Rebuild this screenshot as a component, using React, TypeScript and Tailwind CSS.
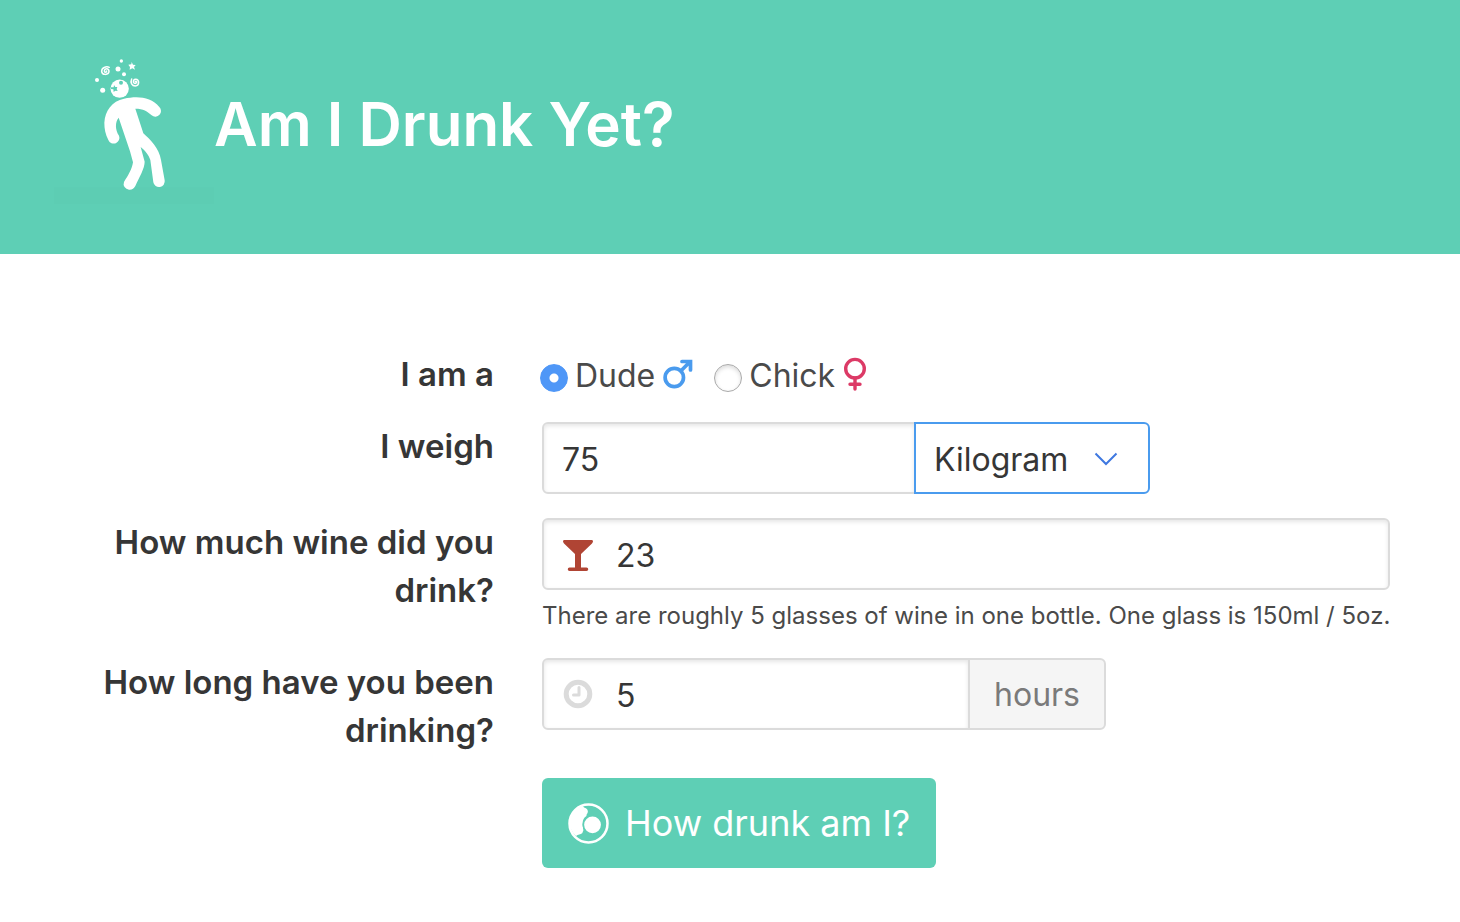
import { useState, type ReactNode } from "react";

function StaggeringFigure() {
  return (
    <svg viewBox="12 0 480 465" className="h-[155px] w-40 shrink-0" aria-hidden="true">
      <rect x="12" y="412" width="480" height="50" fill="#5dcdb3" />
      <path
        d="M175 270C166 252 163 237 163 218C165 182 186 153 222 146C262 137 303 140 328 171A17 17 0 0 1 305 196C292 184 280 176 256 176L280 250C300 268 328 295 333 330L344 391A17 17 0 0 1 310 397L301 330C297 315 283 300 272 291L284 335C284 355 268 382 256 408Q250 420 237 419A17 17 0 0 1 222 396C235 375 246 358 249 337L240 304L206 203C195 215 195 240 207 257A17 17 0 0 1 175 270Z"
        fill="#fff"
      />
      <circle cx="209" cy="116" r="27.500" fill="#fff" />
      <g fill="#5ecfb5">
        <circle cx="213" cy="98" r="6" />
        <path d="M192 105l4 6 6 0-2 6 3 6-7-1-5 4-1-8-7-1 0-5 8 0z" />
      </g>
      <g fill="#fff">
        <circle cx="214" cy="33" r="5" />
        <circle cx="204" cy="57" r="7.500" />
        <circle cx="222" cy="73" r="6" />
        <circle cx="141" cy="90" r="6" />
        <circle cx="158" cy="121" r="7.500" />
        <path d="M245 36l4 8 8 1-5 6 3 8-8-4-8 4 1-8-5-7 9-1z" />
      </g>
      <g fill="none" stroke="#fff" strokeWidth="4.500" strokeLinecap="round">
        <path d="M178 52C168 48 155 53 155 64C156 76 175 76 177 65C177 54 163 54 163 63C163 68 169 68 170 63" />
        <path d="M245 87C240 98 246 108 256 108C269 107 269 88 257 88C247 89 249 102 257 100C262 98 260 93 256 95" />
      </g>
    </svg>
  );
}

function MarsIcon() {
  return (
    <svg viewBox="0 0 30 34" className="h-[34px] w-[30px]" fill="none" stroke="#4a9bee" strokeWidth="3.700" aria-hidden="true">
      <circle cx="11.300" cy="20.500" r="9.200" />
      <path d="M17.800 14L27 4.800M19 4.500H27.500V13" strokeLinecap="round" />
    </svg>
  );
}

function VenusIcon() {
  return (
    <svg viewBox="0 0 24 34" className="h-[34px] w-6" fill="none" stroke="#dc3a66" strokeWidth="3.400" aria-hidden="true">
      <circle cx="12" cy="11.700" r="9.300" />
      <path d="M12 21V32M7 27.300H17" strokeLinecap="round" />
    </svg>
  );
}

function GlassIcon() {
  return (
    <svg viewBox="0 0 32 32" className="h-8 w-8" fill="#b04434" aria-hidden="true">
      <path d="M2 0H30Q32 1 30 3.500L19 14V27.500H24.500A1.700 1.700 0 0 1 24.500 31H7.500A1.700 1.700 0 0 1 7.500 27.500H13V14L2 3.500Q0 1 2 0Z" />
    </svg>
  );
}

function ClockIcon() {
  return (
    <svg viewBox="0 0 30 30" className="mx-px h-[30px] w-[30px]" fill="none" stroke="#dbdbdb" aria-hidden="true">
      <circle cx="15" cy="15" r="11.800" strokeWidth="5" />
      <path d="M16 8.500V16H10.500" strokeWidth="3" strokeLinecap="round" strokeLinejoin="round" />
    </svg>
  );
}

function BubbleIcon() {
  return (
    <svg viewBox="25 23 122 122" className="h-[41px] w-[41px] shrink-0" aria-hidden="true">
      <circle cx="86" cy="84" r="56.500" fill="none" stroke="#fff" strokeWidth="7.500" />
      <path d="M69 32C72 39 82 36 84 47C85 54 79 56 80 62C70 68 66 80 70 99C73 105 68 108 68 112C62 117 55 115 49 121C18 95 25 43 69 32Z" fill="#fff" />
      <circle cx="98" cy="88" r="27.500" fill="#fff" stroke="#5ecfb5" strokeWidth="5" />
    </svg>
  );
}

function Row({ label, htmlFor, id, children }: { label?: string; htmlFor?: string; id?: string; children: ReactNode }) {
  return (
    <div className="grid grid-cols-[1fr_2fr] gap-12">
      <div className="text-right text-[33px] font-semibold text-[#363636]">
        {label && (htmlFor ? <label htmlFor={htmlFor}>{label}</label> : <span id={id}>{label}</span>)}
      </div>
      <div className="min-w-0">{children}</div>
    </div>
  );
}

const radioClass =
  "mt-2 mr-[7px] size-7 shrink-0 appearance-none rounded-full border border-[#aaa] bg-white shadow-[inset_0_2px_4px_rgba(0,0,0,0.15)] checked:border-[#4f97f7] checked:bg-[radial-gradient(circle,#fff_0_4px,#4f97f7_5px)] checked:shadow-none";
const optionTextClass = "mr-2 pt-1 leading-[44px]";
const inputClass =
  "h-[72px] border-2 border-[#dbdbdb] bg-white pt-0.5 text-[#363636] shadow-[inset_0_2px_4px_rgba(10,10,10,0.1)] outline-none";

export default function App() {
  const [sex, setSex] = useState("dude");
  const [weight, setWeight] = useState("75");
  const [unit, setUnit] = useState("Kilogram");
  const [glasses, setGlasses] = useState("23");
  const [hours, setHours] = useState("5");

  return (
    <div className="min-h-screen bg-white font-['Inter',sans-serif] text-[32px] leading-[48px] text-[#4a4a4a]">
      <header className="flex items-center bg-[#5ecfb5] px-[54px] pt-[50px] pb-[49px]">
        <StaggeringFigure />
        <h1 className="pb-2 text-[60px] leading-[72px] font-semibold text-white">Am I Drunk Yet?</h1>
      </header>
      <form className="flex flex-col gap-6 px-[70px] pt-24 pb-12" onSubmit={(e) => e.preventDefault()}>
        <Row label="I am a" id="sex-label">
          <div role="radiogroup" aria-labelledby="sex-label" className="-ml-0.5 flex items-center gap-[21px]">
            <label className="flex items-center">
              <input type="radio" name="sex" className={radioClass} checked={sex === "dude"} onChange={() => setSex("dude")} />
              <span className={optionTextClass}>Dude</span>
              <MarsIcon />
            </label>
            <label className="flex items-center">
              <input type="radio" name="sex" className={radioClass} checked={sex === "chick"} onChange={() => setSex("chick")} />
              <span className={optionTextClass}>Chick</span>
              <VenusIcon />
            </label>
          </div>
        </Row>
        <Row label="I weigh" htmlFor="weight">
          <div className="flex">
            <input id="weight" className={`${inputClass} w-[374px] rounded-l-md px-[18px]`} value={weight} onChange={(e) => setWeight(e.target.value)} />
            <div className="relative -ml-0.5">
              <select
                aria-label="Weight unit"
                className="h-[72px] w-[236px] appearance-none rounded-r-md border-2 border-[#4a9bee] bg-white pt-1 pl-[18px] text-[#363636] outline-none"
                value={unit}
                onChange={(e) => setUnit(e.target.value)}
              >
                <option>Kilogram</option>
                <option>Pound</option>
              </select>
              <svg viewBox="0 0 24 14" className="pointer-events-none absolute top-[30px] right-8 h-3.5 w-6" fill="none" stroke="#3f78e0" strokeWidth="2" aria-hidden="true">
                <path d="M1.500 1.500L12 12L22.500 1.500" />
              </svg>
            </div>
          </div>
        </Row>
        <Row label="How much wine did you drink?" htmlFor="glasses">
          <div className="relative">
            <input id="glasses" className={`${inputClass} w-full rounded-md pr-[18px] pl-[72px]`} value={glasses} onChange={(e) => setGlasses(e.target.value)} />
            <span className="pointer-events-none absolute inset-y-0 left-5 flex items-center pt-1">
              <GlassIcon />
            </span>
          </div>
          <p className="mt-2 -mr-4 text-2xl leading-9">There are roughly 5 glasses of wine in one bottle. One glass is 150ml / 5oz.</p>
        </Row>
        <Row label="How long have you been drinking?" htmlFor="hours">
          <div className="flex">
            <div className="relative">
              <input id="hours" className={`${inputClass} w-[428px] rounded-l-md pr-[18px] pl-[72px]`} value={hours} onChange={(e) => setHours(e.target.value)} />
              <span className="pointer-events-none absolute inset-y-0 left-5 flex items-center">
                <ClockIcon />
              </span>
            </div>
            <span className="-ml-0.5 flex h-[72px] w-[138px] items-center justify-center rounded-r-md border-2 border-[#dbdbdb] bg-[#f5f5f5] pt-0.5 text-[#7a7a7a]">hours</span>
          </div>
        </Row>
        <Row>
          <button type="submit" className="flex h-[90px] w-[394px] items-center gap-4 rounded-md bg-[#5ecfb5] pl-[26px] text-[36px] whitespace-nowrap text-white">
            <BubbleIcon />
            How drunk am I?
          </button>
        </Row>
      </form>
    </div>
  );
}
